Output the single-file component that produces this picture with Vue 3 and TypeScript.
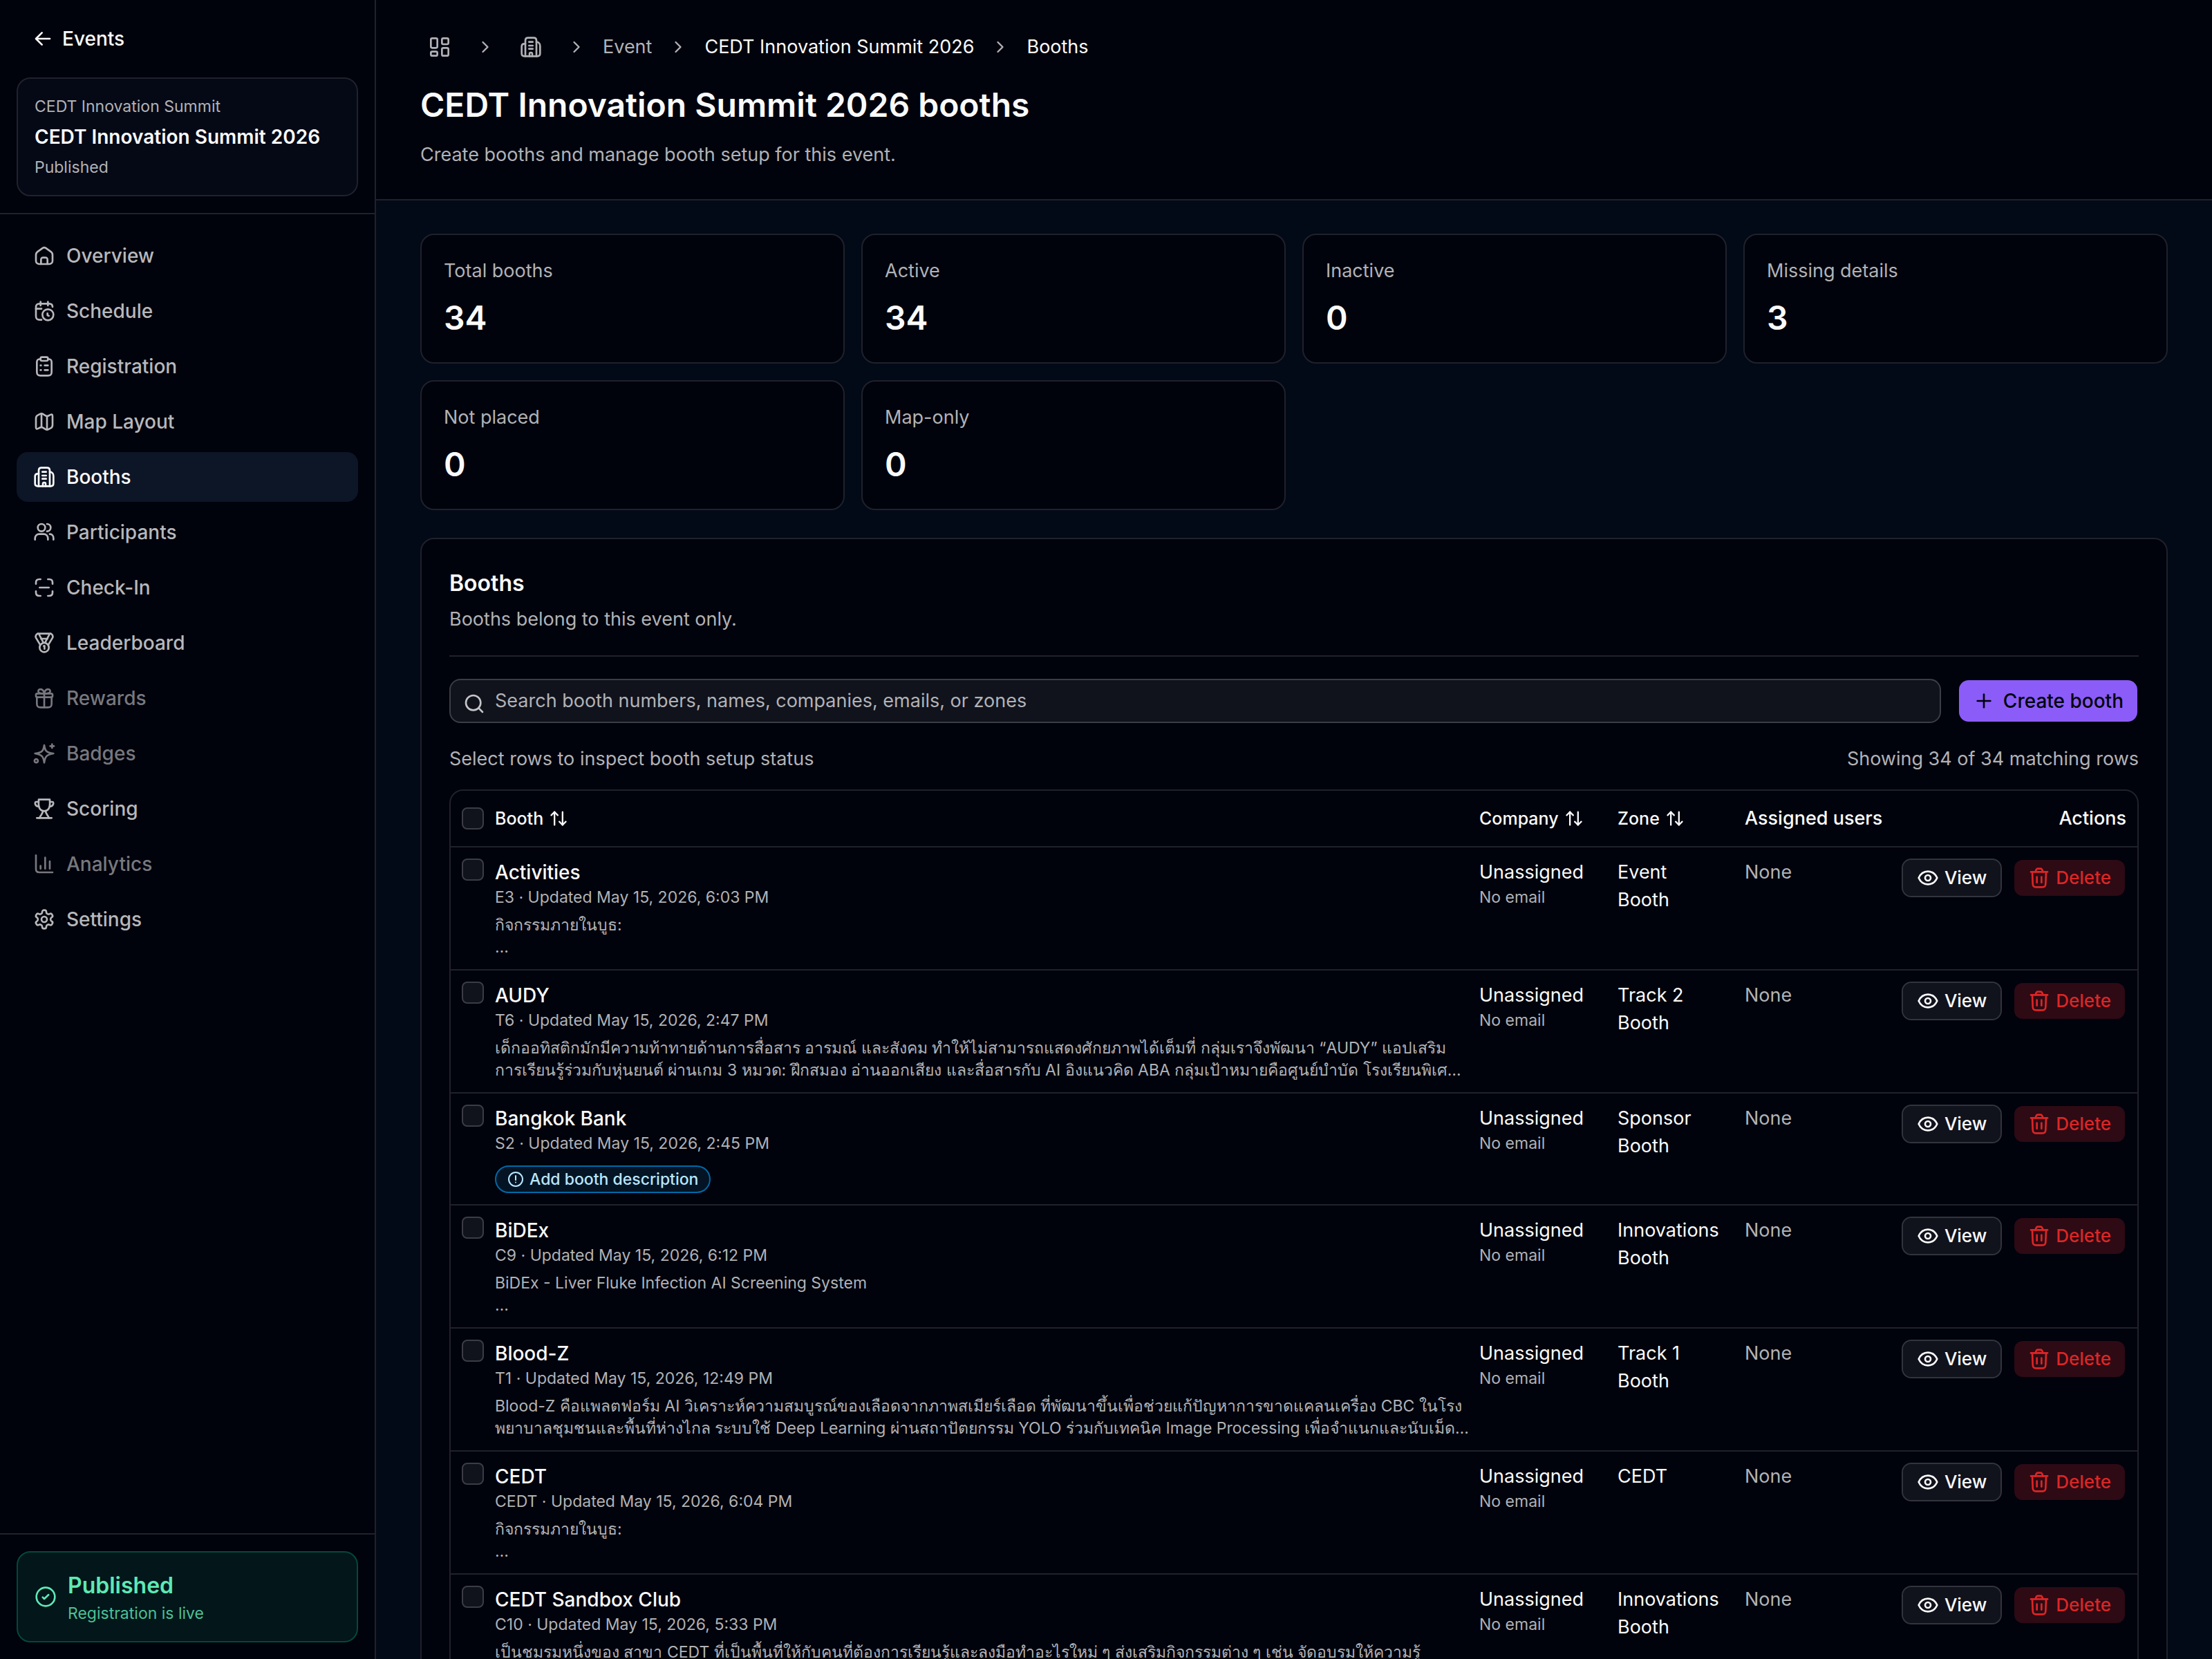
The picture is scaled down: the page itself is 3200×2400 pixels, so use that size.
<script setup lang="ts">
import { ref } from 'vue'

interface NavItem {
  label: string
  icon: string
  active?: boolean
  disabled?: boolean
}

interface Booth {
  name: string
  meta: string
  lines: string[]
  zone: string[]
  missing?: boolean
}

const icons: Record<string, string[]> = {
  back: ['M19.5 12H5', 'M11 5.5C9 7.5 7 9.5 4.5 12C7 14.5 9 16.5 11 18.5'],
  home: [
    'M3 11.2V17.5A3.5 3.5 0 0 0 6.5 21H17.5A3.5 3.5 0 0 0 21 17.5V11.2C21 9.5 20.6 8.6 19.2 7.6L14 3.8C12.5 2.8 11.5 2.8 10 3.8L4.8 7.6C3.4 8.6 3 9.5 3 11.2Z',
    'M8.5 21V16.5C8.5 14.5 9 14 11 14H13C15 14 15.5 14.5 15.5 16.5V21',
  ],
  schedule: [
    'M8 2V6', 'M16 2V6',
    'M21 7.5C21 5 20 4 17.5 4H7C4 4 3 5 3 8V17.5C3 20.5 4 21.5 7 21.5H9',
    'M3 9.5H9',
    'M22 16A6 6 0 1 1 10 16A6 6 0 1 1 22 16Z',
    'M15.5 14.5V16.5L17 17.2',
  ],
  clipboard: [
    'M8 4C5.5 4 4 4.5 4 7.5V18C4 21 5 22 8 22H16C19 22 20 21 20 18V7.5C20 4.5 18.5 4 16 4',
    'M9.5 2H14.5C15.5 2 16 2.5 16 3.5V4.5C16 5.5 15.5 6 14.5 6H9.5C8.5 6 8 5.5 8 4.5V3.5C8 2.5 8.5 2 9.5 2Z',
    'M12.5 11H16', 'M12.5 16H16', 'M8 11H8.5', 'M8 16H8.5',
  ],
  map: [
    'M3 8.5C3 6.5 3.3 5.8 5 5L7.5 3.7C8.8 3 9.3 3 10.5 3.7L13.5 5.5C14.7 6.2 15.3 6.2 16.5 5.6L18.5 4.6C20.3 3.7 21 4 21 6V15.5C21 17.5 20.7 18.2 19 19L16.5 20.3C15.2 21 14.7 21 13.5 20.3L10.5 18.5C9.3 17.8 8.7 17.8 7.5 18.4L5.5 19.4C3.7 20.3 3 20 3 18Z',
    'M9 3.5V17.5', 'M15 6.5V20.5',
  ],
  building: [
    'M6 22V5C6 3 7 2 9 2H15C17 2 18 3 18 5V22',
    'M6 8.5H5C3 8.5 2 9.5 2 11.5V19C2 21 3 22 5 22H19C21 22 22 21 22 19V11C22 9 21 6.5 18 6.5',
    'M10 6.5H14', 'M10 10.5H14', 'M10 14H14',
    'M10.5 22V19.5C10.5 17.5 13.5 17.5 13.5 19.5V22',
  ],
  users: [
    'M13 7A4 4 0 1 1 5 7A4 4 0 1 1 13 7Z',
    'M15 11A4 4 0 0 0 15 3',
    'M2 20V18.5C2 16 4 14 6.5 14H11.5C14 14 16 16 16 18.5V20',
    'M18 14C20.5 14 22 16 22 18.5V20',
  ],
  scan: [
    'M3 8V6.5C3 4 4 3 6.5 3H8', 'M16 3H17.5C20 3 21 4 21 6.5V8',
    'M21 16V17.5C21 20 20 21 17.5 21H16', 'M8 21H6.5C4 21 3 20 3 17.5V16',
    'M7 12H17',
  ],
  medal: [
    'M17 17A5 5 0 1 1 7 17A5 5 0 1 1 17 17Z',
    'M11.5 15.5L12.3 15.3V18.5',
    'M5 2H19',
    'M5 2C3.5 2.5 2 4.5 3 6.5L7.5 14', 'M6.5 3L11 11.5',
    'M19 2C20.5 2.5 22 4.5 21 6.5L16.5 14', 'M17.5 3L13 11.5',
    'M8.5 7.5H15.5',
  ],
  gift: [
    'M4 11V18C4 21 5 22 8 22H16C19 22 20 21 20 18V11',
    'M4.5 7H19.5C20.5 7 21 7.5 21 8.5V9.5C21 10.5 20.5 11 19.5 11H4.5C3.5 11 3 10.5 3 9.5V8.5C3 7.5 3.5 7 4.5 7Z',
    'M12 7V22', 'M12 7C8 7 5.5 6.5 5.5 4.5C5.5 1.5 11 1 12 7Z', 'M12 7C16 7 18.5 6.5 18.5 4.5C18.5 1.5 13 1 12 7Z',
  ],
  sparkle: [
    'M12 3C12.8 9.5 14.5 10.9 22 12C14.5 13.4 13 15 12 22C11 15 9.5 13.4 2 12C9.5 10.9 11.2 9.5 12 3Z',
    'M20.5 2V6', 'M18.5 4H22.5', 'M5.2 20A1.9 1.9 0 1 1 1.4 20A1.9 1.9 0 1 1 5.2 20Z',
  ],
  trophy: [
    'M6 2H18C18.5 9 18 14 12 14.5C6 14 5.5 9 6 2Z',
    'M6 4.5H3C1.5 4.5 1.5 9.5 6 9.5', 'M18 4.5H21C22.5 4.5 22.5 9.5 18 9.5',
    'M10.5 14.5C10.5 18 8 18.5 7 22', 'M13.5 14.5C13.5 18 16 18.5 17 22', 'M4 22H20',
  ],
  chart: ['M3 2.5V17.5C3 20 4 21 6.5 21H21', 'M8 17V14', 'M13 17V5', 'M18 17V9'],
  gear: [
    'M15 12A3 3 0 1 1 9 12A3 3 0 1 1 15 12Z',
    'M12.22 2h-.44a2 2 0 0 0-2 2v.18a2 2 0 0 1-1 1.73l-.43.25a2 2 0 0 1-2 0l-.15-.08a2 2 0 0 0-2.73.73l-.22.38a2 2 0 0 0 .73 2.73l.15.1a2 2 0 0 1 1 1.72v.51a2 2 0 0 1-1 1.74l-.15.09a2 2 0 0 0-.73 2.73l.22.38a2 2 0 0 0 2.73.73l.15-.08a2 2 0 0 1 2 0l.43.25a2 2 0 0 1 1 1.73V20a2 2 0 0 0 2 2h.44a2 2 0 0 0 2-2v-.18a2 2 0 0 1 1-1.73l.43-.25a2 2 0 0 1 2 0l.15.08a2 2 0 0 0 2.73-.73l.22-.39a2 2 0 0 0-.73-2.73l-.15-.08a2 2 0 0 1-1-1.74v-.5a2 2 0 0 1 1-1.74l.15-.09a2 2 0 0 0 .73-2.73l-.22-.38a2 2 0 0 0-2.73-.73l-.15.08a2 2 0 0 1-2 0l-.43-.25a2 2 0 0 1-1-1.73V4a2 2 0 0 0-2-2z',
  ],
  check: ['M22 12A10 10 0 1 1 2 12A10 10 0 1 1 22 12Z', 'M8.8 12.5L10.5 14.2L15.2 9.8'],
  dashboard: [
    'M4 2.5H8C9 2.5 9.5 3 9.5 4V11.5C9.5 12.5 9 13 8 13H4C3 13 2.5 12.5 2.5 11.5V4C2.5 3 3 2.5 4 2.5Z',
    'M16 2.5H20C21 2.5 21.5 3 21.5 4V7.5C21.5 8.5 21 9 20 9H16C15 9 14.5 8.5 14.5 7.5V4C14.5 3 15 2.5 16 2.5Z',
    'M4 17H8C9 17 9.5 17.5 9.5 18.5V20C9.5 21 9 21.5 8 21.5H4C3 21.5 2.5 21 2.5 20V18.5C2.5 17.5 3 17 4 17Z',
    'M16 13H20C21 13 21.5 13.5 21.5 14.5V20C21.5 21 21 21.5 20 21.5H16C15 21.5 14.5 21 14.5 20V14.5C14.5 13.5 15 13 16 13Z',
  ],
  chevron: ['M9 6C11 8 13 10 15 12C13 14 11 16 9 18'],
  search: ['M17 17L21 21', 'M19 11A8 8 0 1 1 3 11A8 8 0 1 1 19 11Z'],
  plus: ['M12 5V19', 'M5 12H19'],
  sort: ['M7 4V20', 'M3 8C4.5 6.5 5.5 5.5 7 4C8.5 5.5 9.5 6.5 11 8', 'M17 20V4', 'M13 16C14.5 17.5 15.5 18.5 17 20C18.5 18.5 19.5 17.5 21 16'],
  alert: ['M22 12A10 10 0 1 1 2 12A10 10 0 1 1 22 12Z', 'M12 7V13', 'M12 16.5V16.6'],
  eye: ['M2 12C4 7.5 8 5 12 5C16 5 20 7.5 22 12C20 16.5 16 19 12 19C8 19 4 16.5 2 12Z', 'M15 12A3 3 0 1 1 9 12A3 3 0 1 1 15 12Z'],
  trash: ['M19.5 5.5L19 18C19 21 18 22 15.5 22H8.5C6 22 5 21 5 18L4.5 5.5', 'M3 5.5H21', 'M8 5.5C8.5 3 9 2 10.5 2H13.5C15 2 15.5 3 16 5.5', 'M9.5 11V17', 'M14.5 11V17'],
}

const nav: NavItem[] = [
  { label: 'Overview', icon: 'home' },
  { label: 'Schedule', icon: 'schedule' },
  { label: 'Registration', icon: 'clipboard' },
  { label: 'Map Layout', icon: 'map' },
  { label: 'Booths', icon: 'building', active: true },
  { label: 'Participants', icon: 'users' },
  { label: 'Check-In', icon: 'scan' },
  { label: 'Leaderboard', icon: 'medal' },
  { label: 'Rewards', icon: 'gift', disabled: true },
  { label: 'Badges', icon: 'sparkle', disabled: true },
  { label: 'Scoring', icon: 'trophy' },
  { label: 'Analytics', icon: 'chart', disabled: true },
  { label: 'Settings', icon: 'gear' },
]

const stats = [
  { label: 'Total booths', value: 34 },
  { label: 'Active', value: 34 },
  { label: 'Inactive', value: 0 },
  { label: 'Missing details', value: 3 },
  { label: 'Not placed', value: 0 },
  { label: 'Map-only', value: 0 },
]

const booths: Booth[] = [
  { name: 'Activities', meta: 'E3 · Updated May 15, 2026, 6:03 PM', lines: ['กิจกรรมภายในบูธ:', '…'], zone: ['Event', 'Booth'] },
  {
    name: 'AUDY', meta: 'T6 · Updated May 15, 2026, 2:47 PM',
    lines: [
      'เด็กออทิสติกมักมีความท้าทายด้านการสื่อสาร อารมณ์ และสังคม ทำให้ไม่สามารถแสดงศักยภาพได้เต็มที่ กลุ่มเราจึงพัฒนา “AUDY” แอปเสริม',
      'การเรียนรู้ร่วมกับหุ่นยนต์ ผ่านเกม 3 หมวด: ฝึกสมอง อ่านออกเสียง และสื่อสารกับ AI อิงแนวคิด ABA กลุ่มเป้าหมายคือศูนย์บำบัด โรงเรียนพิเศ…',
    ],
    zone: ['Track 2', 'Booth'],
  },
  { name: 'Bangkok Bank', meta: 'S2 · Updated May 15, 2026, 2:45 PM', lines: [], zone: ['Sponsor', 'Booth'], missing: true },
  { name: 'BiDEx', meta: 'C9 · Updated May 15, 2026, 6:12 PM', lines: ['BiDEx - Liver Fluke Infection AI Screening System', '…'], zone: ['Innovations', 'Booth'] },
  {
    name: 'Blood-Z', meta: 'T1 · Updated May 15, 2026, 12:49 PM',
    lines: [
      'Blood-Z คือแพลตฟอร์ม AI วิเคราะห์ความสมบูรณ์ของเลือดจากภาพสเมียร์เลือด ที่พัฒนาขึ้นเพื่อช่วยแก้ปัญหาการขาดแคลนเครื่อง CBC ในโรง',
      'พยาบาลชุมชนและพื้นที่ห่างไกล ระบบใช้ Deep Learning ผ่านสถาปัตยกรรม YOLO ร่วมกับเทคนิค Image Processing เพื่อจำแนกและนับเม็ด…',
    ],
    zone: ['Track 1', 'Booth'],
  },
  { name: 'CEDT', meta: 'CEDT · Updated May 15, 2026, 6:04 PM', lines: ['กิจกรรมภายในบูธ:', '…'], zone: ['CEDT'] },
  {
    name: 'CEDT Sandbox Club', meta: 'C10 · Updated May 15, 2026, 5:33 PM',
    lines: ['เป็นชมรมหนึ่งของ สาขา CEDT ที่เป็นพื้นที่ให้กับคนที่ต้องการเรียนรู้และลงมือทำอะไรใหม่ ๆ ส่งเสริมกิจกรรมต่าง ๆ เช่น จัดอบรมให้ความรู้', '…'],
    zone: ['Innovations', 'Booth'],
  },
]

const query = ref('')
</script>

<template>
  <div class="app">
    <aside class="sidebar">
      <div class="side-top">
        <a href="#" class="back">
          <svg class="icon" viewBox="0 0 24 24"><path v-for="d in icons.back" :key="d" :d="d" /></svg>
          Events
        </a>
        <div class="event-card">
          <p class="small">CEDT Innovation Summit</p>
          <p class="event-name">CEDT Innovation Summit 2026</p>
          <p class="small">Published</p>
        </div>
      </div>
      <nav class="nav">
        <a
          v-for="item in nav"
          :key="item.label"
          href="#"
          class="nav-item"
          :class="{ active: item.active, disabled: item.disabled }"
        >
          <svg class="icon" viewBox="0 0 24 24"><path v-for="d in icons[item.icon]" :key="d" :d="d" /></svg>
          {{ item.label }}
        </a>
      </nav>
      <div class="side-bottom">
        <div class="status-card">
          <svg class="icon" viewBox="0 0 24 24"><path v-for="d in icons.check" :key="d" :d="d" /></svg>
          <div>
            <p class="status-title">Published</p>
            <p class="status-text">Registration is live</p>
          </div>
        </div>
      </div>
    </aside>

    <main class="main">
      <header class="page-header">
        <nav class="crumbs" aria-label="Breadcrumb">
          <a href="#" class="crumb-icon" aria-label="Dashboard">
            <svg class="icon" viewBox="0 0 24 24"><path v-for="d in icons.dashboard" :key="d" :d="d" /></svg>
          </a>
          <svg class="icon chevron" viewBox="0 0 24 24"><path :d="icons.chevron[0]" /></svg>
          <a href="#" class="crumb-icon" aria-label="Organization">
            <svg class="icon" viewBox="0 0 24 24"><path v-for="d in icons.building" :key="d" :d="d" /></svg>
          </a>
          <svg class="icon chevron" viewBox="0 0 24 24"><path :d="icons.chevron[0]" /></svg>
          <a href="#">Event</a>
          <svg class="icon chevron" viewBox="0 0 24 24"><path :d="icons.chevron[0]" /></svg>
          <a href="#" class="current">CEDT Innovation Summit 2026</a>
          <svg class="icon chevron" viewBox="0 0 24 24"><path :d="icons.chevron[0]" /></svg>
          <span class="current">Booths</span>
        </nav>
        <h1>CEDT Innovation Summit 2026 booths</h1>
        <p class="lead">Create booths and manage booth setup for this event.</p>
      </header>

      <div class="content">
        <section class="stats">
          <div v-for="s in stats" :key="s.label" class="stat">
            <p class="stat-label">{{ s.label }}</p>
            <p class="stat-value">{{ s.value }}</p>
          </div>
        </section>

        <section class="panel">
          <div class="panel-head">
            <h2>Booths</h2>
            <p>Booths belong to this event only.</p>
          </div>
          <div class="toolbar">
            <div class="search">
              <svg class="icon" viewBox="0 0 24 24"><path v-for="d in icons.search" :key="d" :d="d" /></svg>
              <input
                v-model="query"
                type="text"
                aria-label="Search booths"
                placeholder="Search booth numbers, names, companies, emails, or zones"
              />
            </div>
            <button type="button" class="btn create">
              <svg class="icon" viewBox="0 0 24 24"><path v-for="d in icons.plus" :key="d" :d="d" /></svg>
              Create booth
            </button>
          </div>
          <div class="summary">
            <span>Select rows to inspect booth setup status</span>
            <span>Showing 34 of 34 matching rows</span>
          </div>
          <div class="table-box">
            <table>
              <colgroup>
                <col class="c-check" />
                <col />
                <col class="c-company" />
                <col class="c-zone" />
                <col class="c-users" />
                <col class="c-actions" />
              </colgroup>
              <thead>
                <tr>
                  <th class="pick"><input type="checkbox" aria-label="Select all rows" /></th>
                  <th>
                    <button type="button" class="sort">
                      Booth <svg class="icon" viewBox="0 0 24 24"><path v-for="d in icons.sort" :key="d" :d="d" /></svg>
                    </button>
                  </th>
                  <th>
                    <button type="button" class="sort">
                      Company <svg class="icon" viewBox="0 0 24 24"><path v-for="d in icons.sort" :key="d" :d="d" /></svg>
                    </button>
                  </th>
                  <th>
                    <button type="button" class="sort">
                      Zone <svg class="icon" viewBox="0 0 24 24"><path v-for="d in icons.sort" :key="d" :d="d" /></svg>
                    </button>
                  </th>
                  <th>Assigned users</th>
                  <th class="right">Actions</th>
                </tr>
              </thead>
              <tbody>
                <tr v-for="b in booths" :key="b.name">
                  <td class="pick"><input type="checkbox" :aria-label="`Select ${b.name}`" /></td>
                  <td>
                    <p class="name">{{ b.name }}</p>
                    <p class="sub">{{ b.meta }}</p>
                    <p v-if="b.lines.length" class="desc">
                      <span v-for="line in b.lines" :key="line">{{ line }}</span>
                    </p>
                    <span v-if="b.missing" class="badge">
                      <svg class="icon" viewBox="0 0 24 24"><path v-for="d in icons.alert" :key="d" :d="d" /></svg>
                      Add booth description
                    </span>
                  </td>
                  <td>
                    <p>Unassigned</p>
                    <p class="sub">No email</p>
                  </td>
                  <td><p v-for="z in b.zone" :key="z">{{ z }}</p></td>
                  <td class="muted">None</td>
                  <td>
                    <div class="actions">
                      <button type="button" class="btn view">
                        <svg class="icon" viewBox="0 0 24 24"><path v-for="d in icons.eye" :key="d" :d="d" /></svg>
                        View
                      </button>
                      <button type="button" class="btn delete">
                        <svg class="icon" viewBox="0 0 24 24"><path v-for="d in icons.trash" :key="d" :d="d" /></svg>
                        Delete
                      </button>
                    </div>
                  </td>
                </tr>
              </tbody>
            </table>
          </div>
        </section>
      </div>
    </main>
  </div>
</template>

<style>
body {
  margin: 0;
  background: #00020c;
}
</style>

<style scoped>
.app {
  --base: #00020c;
  --line: #1f212b;
  --muted: #b1b2b6;
  display: flex;
  height: 100vh;
  overflow: hidden;
  background: var(--base);
  color: #fafafa;
  font: 400 27px/40px Inter, "Noto Sans", sans-serif;
}
.app * {
  box-sizing: border-box;
}
p, h1, h2 {
  margin: 0;
}
a {
  color: inherit;
  text-decoration: none;
}
button {
  font: inherit;
  cursor: pointer;
}
.icon {
  flex: none;
  width: 32px;
  height: 32px;
  fill: none;
  stroke: currentColor;
  stroke-width: 2;
  stroke-linecap: round;
  stroke-linejoin: round;
}

.sidebar {
  display: flex;
  flex: none;
  flex-direction: column;
  width: 544px;
  border-right: 2px solid var(--line);
}
.side-top {
  display: flex;
  flex-direction: column;
  gap: 24px;
  padding: 24px;
  border-bottom: 2px solid var(--line);
}
.back {
  display: flex;
  align-items: center;
  gap: 12px;
  height: 64px;
  padding: 0 22px;
  font-size: 28px;
  font-weight: 500;
}
.event-card {
  display: flex;
  flex-direction: column;
  gap: 8px;
  padding: 24px;
  border: 2px solid #20222c;
  border-radius: 20px;
  background: #050916;
}
.small {
  color: var(--muted);
  font-size: 23px;
  line-height: 32px;
}
.event-name {
  font-size: 28px;
  font-weight: 600;
}
.nav {
  display: flex;
  flex: 1;
  flex-direction: column;
  gap: 8px;
  padding: 24px;
}
.nav-item {
  display: flex;
  align-items: center;
  gap: 16px;
  height: 72px;
  padding: 0 24px;
  border-radius: 16px;
  color: #b7b8bb;
  font-size: 28px;
  font-weight: 500;
}
.nav-item.active {
  background: #0d1627;
  color: #fafafa;
}
.nav-item.disabled {
  color: #77787d;
}
.side-bottom {
  padding: 24px;
  border-top: 2px solid var(--line);
}
.status-card {
  display: flex;
  align-items: center;
  gap: 16px;
  padding: 24px;
  border: 2px solid #03493b;
  border-radius: 20px;
  background: #03161a;
  color: #5ee9b5;
}
.status-title {
  font-size: 32px;
  font-weight: 600;
  line-height: 48px;
}
.status-text {
  color: #4cc096;
  font-size: 23px;
  line-height: 32px;
}

.main {
  flex: 1;
  min-width: 0;
  overflow: hidden;
  background: #030a17;
}
.page-header {
  padding: 40px 64px;
  border-bottom: 2px solid var(--line);
  background: var(--base);
}
.crumbs {
  display: flex;
  align-items: center;
  gap: 24px;
  height: 56px;
  color: var(--muted);
}
.crumb-icon {
  display: flex;
  align-items: center;
  justify-content: center;
  width: 56px;
  height: 56px;
}
.chevron {
  width: 28px;
  height: 28px;
}
.current {
  color: #fafafa;
}
h1 {
  margin: 24px 0 16px;
  font-size: 48px;
  font-weight: 600;
  line-height: 64px;
}
.lead {
  color: var(--muted);
  line-height: 48px;
}
.content {
  padding: 48px 64px;
}
.stats {
  display: grid;
  grid-template-columns: repeat(4, 1fr);
  gap: 24px;
}
.stat {
  padding: 32px;
  border: 2px solid var(--line);
  border-radius: 20px;
  background: var(--base);
}
.stat-label {
  color: var(--muted);
}
.stat-value {
  margin-top: 16px;
  font-size: 48px;
  font-weight: 600;
  line-height: 64px;
}

.panel {
  margin-top: 40px;
  padding: 40px;
  border: 2px solid var(--line);
  border-radius: 20px;
  background: var(--base);
}
.panel-head {
  padding-bottom: 32px;
  border-bottom: 2px solid var(--line);
}
h2 {
  margin-bottom: 8px;
  font-size: 32px;
  font-weight: 600;
  line-height: 48px;
}
.panel-head p,
.summary,
.muted {
  color: var(--muted);
}
.toolbar {
  display: flex;
  gap: 24px;
  margin: 32px 0;
}
.search {
  display: flex;
  flex: 1;
  gap: 14px;
  height: 64px;
  padding: 0 18px;
  border: 2px solid #3b3d46;
  border-radius: 16px;
  background: #10121c;
  color: #c4c5c8;
}
.search .icon {
  margin-top: 18px;
}
.search input {
  flex: 1;
  min-width: 0;
  padding: 0;
  border: 0;
  outline: 0;
  background: transparent;
  color: #fafafa;
  font: inherit;
}
.search input::placeholder {
  color: var(--muted);
  opacity: 1;
}
.btn {
  display: flex;
  align-items: center;
  gap: 8px;
  height: 56px;
  padding: 0 20px;
  border: 2px solid transparent;
  border-radius: 14px;
  background-clip: padding-box;
  font-size: 26px;
  font-weight: 500;
}
.create {
  gap: 12px;
  height: 64px;
  border-radius: 16px;
  background-color: #8c5cf8;
  color: #00020c;
  font-size: 28px;
}
.summary {
  display: flex;
  justify-content: space-between;
  margin-bottom: 24px;
}

.table-box {
  overflow: hidden;
  border: 2px solid var(--line);
  border-radius: 20px;
}
table {
  width: 100%;
  border-spacing: 0;
  table-layout: fixed;
}
.c-check { width: 48px; }
.c-company { width: 200px; }
.c-zone { width: 184px; }
.c-users { width: 232px; }
.c-actions { width: 352px; }
th {
  height: 82px;
  padding: 0 16px;
  border-bottom: 2px solid var(--line);
  font-weight: 500;
  text-align: left;
  white-space: nowrap;
}
th.right {
  text-align: right;
}
td {
  padding: 16px;
  border-bottom: 2px solid var(--line);
  vertical-align: top;
}
.pick {
  padding-right: 0;
}
.pick input {
  display: block;
  width: 32px;
  height: 32px;
  margin: 0;
  border: 2px solid #3b3d46;
  border-radius: 8px;
  appearance: none;
  background: #10121c;
}
.sort {
  display: flex;
  align-items: center;
  gap: 8px;
  padding: 0;
  border: 0;
  background: none;
  color: inherit;
  font-size: 25px;
}
.sort .icon {
  width: 28px;
  height: 28px;
}
.name {
  font-size: 28px;
  font-weight: 500;
}
.sub,
.desc {
  color: var(--muted);
  font-size: 23px;
  line-height: 32px;
}
.desc {
  margin-top: 8px;
}
.desc span {
  display: block;
  white-space: nowrap;
}
.badge {
  display: flex;
  align-items: center;
  gap: 8px;
  width: fit-content;
  height: 40px;
  margin-top: 16px;
  padding: 0 16px;
  border: 2px solid #0069a8;
  border-radius: 20px;
  background: #041424;
  color: #b8e6fe;
  font-size: 23px;
  font-weight: 500;
}
.badge .icon {
  width: 24px;
  height: 24px;
}
.actions {
  display: flex;
  justify-content: flex-end;
  gap: 16px;
}
.view {
  border-color: #31333d;
  background-color: #10121c;
  color: #fafafa;
}
.delete {
  background-color: #2d0a14;
  color: #dc2626;
}
</style>
